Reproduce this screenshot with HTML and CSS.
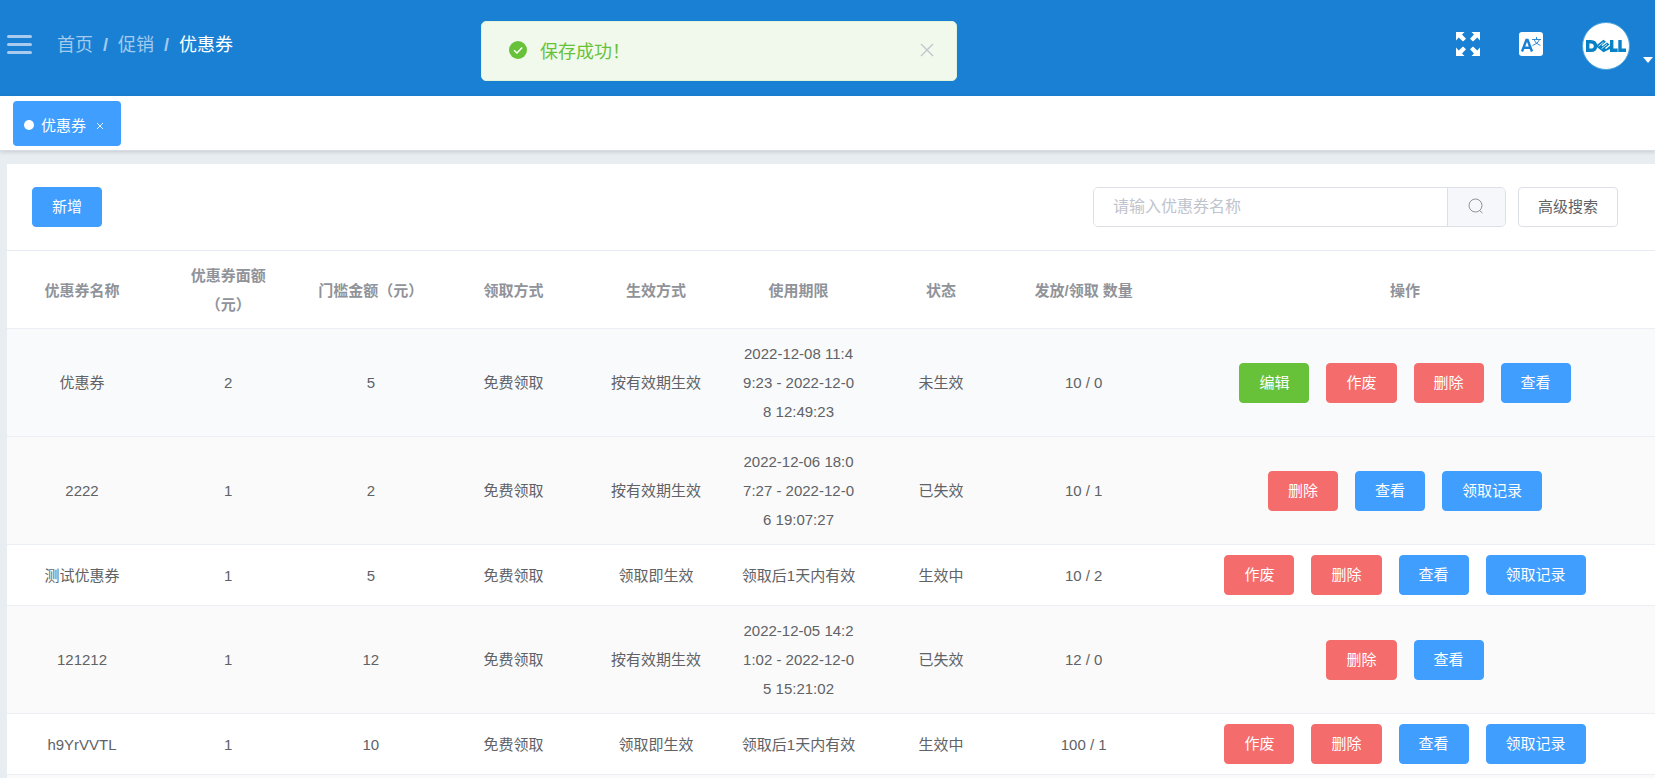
FILE: index.html
```html
<!DOCTYPE html>
<html lang="zh-CN">
<head>
    <meta charset="UTF-8">
    <meta name="viewport" content="width=device-width, initial-scale=1.0">
    <title>优惠券</title>
    <link rel="stylesheet" href="styles.css">
</head>
<body>

    <!-- Top bar -->
    <header class="navbar">
        <button class="menu-toggle" type="button" aria-label="菜单">
            <span></span>
            <span></span>
            <span></span>
        </button>
        <nav class="breadcrumb">
            <a href="#">首页</a>
            <span class="separator">/</span>
            <a href="#">促销</a>
            <span class="separator">/</span>
            <span class="current">优惠券</span>
        </nav>
        <div class="navbar-right">
            <button class="icon-btn" type="button" aria-label="全屏">
                <svg width="24" height="24" viewBox="0 0 24 24" fill="#fff">
                    <path d="M0 0h8.500L6 2.500l4 4.200L7 9.500 2.700 5.500 0 8.500z"/>
                    <path d="M24 0v8.500l-2.700-3L17 9.500l-3-2.800 4-4.200L15.500 0z"/>
                    <path d="M0 24v-8.500l2.700 3L7 14.500l3 2.800-4 4.200L8.500 24z"/>
                    <path d="M24 24h-8.500l2.500-2.500-4-4.200 3-2.800 4.300 4 2.700-3z"/>
                </svg>
            </button>
            <button class="icon-btn" type="button" aria-label="语言">
                <svg width="24" height="24" viewBox="0 0 24 24">
                    <rect width="24" height="24" rx="3" fill="#fff"/>
                    <path d="M3 19.500L7.400 8h1.200L13 19.500M4.800 15.800h6.400" fill="none" stroke="#1a80d4" stroke-width="2.400"/>
                    <path d="M13 7.500h9M17.500 5v2.500M15 7.500q1 4 6.500 6M20.500 7.500q-1 4-7 6" fill="none" stroke="#1a80d4" stroke-width=".9"/>
                </svg>
            </button>
            <button class="avatar-btn" type="button" aria-label="用户">
                <svg class="avatar" width="48" height="48" viewBox="0 0 48 48">
                    <circle cx="24" cy="24" r="23.500" fill="#fff" stroke="#4fa5dc"/>
                    <g fill="none" stroke="#0782c5" stroke-width="3.400">
                        <path d="M5.700 19.700h3q4.800 0 4.800 4.300t-4.800 4.300h-3z"/>
                        <path d="M29.700 18v10.300h6M38 18v10.300h6"/>
                    </g>
                    <path d="M13.500 24L21.500 17.700l2.500 2-4.500 3.600 1 .800 4.500-3.600 2.500 2-4.500 3.600 1 .800 4.500-3.600v3.400L21.500 30.300z" fill="#0782c5"/>
                    <path d="M16.500 24.200l5-4M19.500 26.700l5.500-4.400" stroke="#fff" stroke-width=".8"/>
                </svg>
                <span class="caret"></span>
            </button>
        </div>
    </header>

    <!-- Success message -->
    <div class="message" role="alert">
        <svg width="18" height="18" viewBox="0 0 18 18">
            <circle cx="9" cy="9" r="9" fill="#67c23a"/>
            <path d="M5 9.200l3 2.800 5.200-5.400" fill="none" stroke="#fff" stroke-width="1.500"/>
        </svg>
        <p>保存成功！</p>
        <button type="button" aria-label="关闭">
            <svg width="14" height="14" viewBox="0 0 14 14">
                <path d="M1 1l12 12M13 1L1 13" stroke="#c0c4cc" stroke-width="1.300"/>
            </svg>
        </button>
    </div>

    <!-- Opened pages -->
    <div class="tags-view">
        <a class="tag" href="#">
            <span class="dot"></span>
            优惠券
            <svg class="tag-close" width="6" height="6" viewBox="0 0 6 6">
                <path d="M0 0l6 6M6 0L0 6" stroke="#fff" stroke-width=".9"/>
            </svg>
        </a>
    </div>

    <main class="card">
        <div class="toolbar">
            <button class="btn btn-primary" type="button">新增</button>
            <form class="search">
                <div class="search-group">
                    <input type="text" placeholder="请输入优惠券名称" aria-label="优惠券名称">
                    <button type="button" aria-label="搜索">
                        <svg width="16" height="16" viewBox="0 0 16 16" fill="none" stroke="#909399">
                            <circle cx="7.500" cy="7.500" r="6.500"/>
                            <path d="M11.500 12.500l3 2.500"/>
                        </svg>
                    </button>
                </div>
                <button class="btn" type="button">高级搜索</button>
            </form>
        </div>

        <table class="coupon-table">
            <colgroup>
                <col class="col-name">
                <col span="7">
                <col class="col-actions">
            </colgroup>
            <thead>
                <tr>
                    <th>优惠券名称</th>
                    <th>优惠券面额（元）</th>
                    <th>门槛金额（元）</th>
                    <th>领取方式</th>
                    <th>生效方式</th>
                    <th>使用期限</th>
                    <th>状态</th>
                    <th>发放/领取 数量</th>
                    <th>操作</th>
                </tr>
            </thead>
            <tbody>
                <tr class="hover">
                    <td>优惠券</td>
                    <td>2</td>
                    <td>5</td>
                    <td>免费领取</td>
                    <td>按有效期生效</td>
                    <td>2022-12-08 11:49:23 - 2022-12-08 12:49:23</td>
                    <td>未生效</td>
                    <td>10 / 0</td>
                    <td>
                        <div class="actions">
                            <button class="btn btn-success" type="button">编辑</button>
                            <button class="btn btn-danger" type="button">作废</button>
                            <button class="btn btn-danger" type="button">删除</button>
                            <button class="btn btn-primary" type="button">查看</button>
                        </div>
                    </td>
                </tr>
                <tr class="striped">
                    <td>2222</td>
                    <td>1</td>
                    <td>2</td>
                    <td>免费领取</td>
                    <td>按有效期生效</td>
                    <td>2022-12-06 18:07:27 - 2022-12-06 19:07:27</td>
                    <td>已失效</td>
                    <td>10 / 1</td>
                    <td>
                        <div class="actions">
                            <button class="btn btn-danger" type="button">删除</button>
                            <button class="btn btn-primary" type="button">查看</button>
                            <button class="btn btn-primary" type="button">领取记录</button>
                        </div>
                    </td>
                </tr>
                <tr>
                    <td>测试优惠券</td>
                    <td>1</td>
                    <td>5</td>
                    <td>免费领取</td>
                    <td>领取即生效</td>
                    <td>领取后1天内有效</td>
                    <td>生效中</td>
                    <td>10 / 2</td>
                    <td>
                        <div class="actions">
                            <button class="btn btn-danger" type="button">作废</button>
                            <button class="btn btn-danger" type="button">删除</button>
                            <button class="btn btn-primary" type="button">查看</button>
                            <button class="btn btn-primary" type="button">领取记录</button>
                        </div>
                    </td>
                </tr>
                <tr class="striped">
                    <td>121212</td>
                    <td>1</td>
                    <td>12</td>
                    <td>免费领取</td>
                    <td>按有效期生效</td>
                    <td>2022-12-05 14:21:02 - 2022-12-05 15:21:02</td>
                    <td>已失效</td>
                    <td>12 / 0</td>
                    <td>
                        <div class="actions">
                            <button class="btn btn-danger" type="button">删除</button>
                            <button class="btn btn-primary" type="button">查看</button>
                        </div>
                    </td>
                </tr>
                <tr>
                    <td>h9YrVVTL</td>
                    <td>1</td>
                    <td>10</td>
                    <td>免费领取</td>
                    <td>领取即生效</td>
                    <td>领取后1天内有效</td>
                    <td>生效中</td>
                    <td>100 / 1</td>
                    <td>
                        <div class="actions">
                            <button class="btn btn-danger" type="button">作废</button>
                            <button class="btn btn-danger" type="button">删除</button>
                            <button class="btn btn-primary" type="button">查看</button>
                            <button class="btn btn-primary" type="button">领取记录</button>
                        </div>
                    </td>
                </tr>
                <tr class="striped">
                    <td colspan="9"></td>
                </tr>
            </tbody>
        </table>
    </main>

</body>
</html>
```
FILE: styles.css
```css
* {
    box-sizing: border-box;
}

html {
    height: 100%;
    overflow: hidden;
}

body {
    margin: 0;
    background-color: #e8edf2;
    color: #606266;
    font-family: "Liberation Sans", "Noto Sans CJK SC", sans-serif;
    font-size: 15px;
}

button,
input {
    font-family: inherit;
}

button {
    cursor: pointer;
}

/* --- Top bar --- */
.navbar {
    display: flex;
    align-items: center;
    height: 96px;
    padding: 0 2px 8px 7px;
    background-color: #1a80d4;
}

.menu-toggle {
    display: flex;
    flex-direction: column;
    gap: 5px;
    width: 25px;
    padding: 0;
    border: none;
    background: none;
}

.menu-toggle span {
    height: 3px;
    border-radius: 2px;
    background-color: #a9cbed;
}

.breadcrumb {
    display: flex;
    gap: 10px;
    margin-left: 25px;
    padding-top: 2px;
    font-size: 18px;
    line-height: 24px;
    color: #a3cbee;
}

.breadcrumb a {
    color: inherit;
    text-decoration: none;
}

.breadcrumb .separator {
    font-weight: bold;
}

.breadcrumb .current {
    color: #fff;
}

.navbar-right {
    display: flex;
    align-items: center;
    margin-left: auto;
}

.icon-btn {
    display: flex;
    margin-right: 39px;
    padding: 0;
    border: none;
    background: none;
}

.avatar-btn {
    display: flex;
    align-items: flex-end;
    gap: 13px;
    padding: 4px 0 0;
    border: none;
    background: none;
}

.caret {
    margin-bottom: 7px;
    border: 5px solid transparent;
    border-top: 6px solid #fff;
    border-bottom: none;
}

/* --- Success message --- */
.message {
    position: fixed;
    top: 21px;
    left: 481px;
    z-index: 10;
    display: flex;
    align-items: center;
    gap: 13px;
    width: 476px;
    height: 60px;
    padding: 0 22px 2px 27px;
    border: 1px solid #e1f3d8;
    border-radius: 5px;
    background-color: #f0f9eb;
    color: #67c23a;
    font-size: 18px;
}

.message p {
    flex: 1;
    margin: 0;
}

.message button {
    display: flex;
    padding: 0;
    border: none;
    background: none;
}

/* --- Opened pages --- */
.tags-view {
    padding: 5px 13px 4px;
    background-color: #fff;
    border-bottom: 1px solid #d8dce5;
    box-shadow: 0 1px 4px rgba(0, 0, 0, 0.15);
}

.tag {
    display: inline-flex;
    align-items: center;
    height: 45px;
    padding: 2px 18px 0 11px;
    border-radius: 4px;
    background-color: #409eff;
    color: #fff;
    text-decoration: none;
    vertical-align: top;
}

.tag .dot {
    width: 10px;
    height: 10px;
    margin-right: 7px;
    border-radius: 50%;
    background-color: #fff;
}

.tag-close {
    margin: 3px 0 0 11px;
}

/* --- Buttons --- */
.btn {
    height: 40px;
    padding: 0 19px 3px;
    border: 1px solid #dcdfe6;
    border-radius: 4px;
    background-color: #fff;
    color: #606266;
    font-size: 15px;
    white-space: nowrap;
}

.btn-primary {
    border-color: #409eff;
    background-color: #409eff;
    color: #fff;
}

.btn-success {
    border-color: #67c23a;
    background-color: #67c23a;
    color: #fff;
}

.btn-danger {
    border-color: #f56c6c;
    background-color: #f56c6c;
    color: #fff;
}

/* --- Toolbar above the table --- */
.card {
    margin: 13px 0 0 7px;
    background-color: #fff;
}

.toolbar {
    display: flex;
    justify-content: space-between;
    padding: 23px 37px 23px 25px;
    border-bottom: 1px solid #e6ebf5;
}

.search {
    display: flex;
    gap: 12px;
}

.search-group {
    display: flex;
    width: 413px;
    height: 40px;
    border: 1px solid #dcdfe6;
    border-radius: 5px;
    overflow: hidden;
}

.search-group input {
    flex: 1;
    min-width: 0;
    padding: 0 19px;
    border: none;
    outline: none;
    font-size: 16px;
}

.search-group input::placeholder {
    color: #c0c4cc;
}

.search-group button {
    display: flex;
    align-items: center;
    justify-content: center;
    width: 58px;
    padding-bottom: 3px;
    border: none;
    border-left: 1px solid #dcdfe6;
    background-color: #f5f7fa;
}

/* --- Coupon table --- */
.coupon-table {
    width: 100%;
    table-layout: fixed;
    border-collapse: separate;
    border-spacing: 0;
}

.coupon-table th,
.coupon-table td {
    padding: 10px 13px;
    border-bottom: 1px solid #ebeef5;
    line-height: 29px;
    text-align: center;
    word-break: break-all;
    text-spacing-trim: space-all;
}

.coupon-table th {
    padding-bottom: 9px;
    color: #909399;
}

.col-name {
    width: 150px;
}

.col-actions {
    width: 500px;
}

.hover td {
    background-color: #f8fafc;
}

.striped td {
    background-color: #fafafa;
}

.actions {
    display: flex;
    justify-content: center;
    gap: 17px;
}
```
